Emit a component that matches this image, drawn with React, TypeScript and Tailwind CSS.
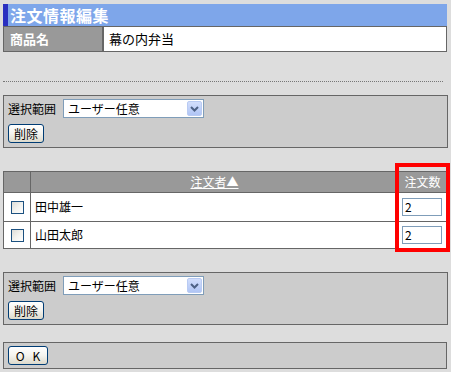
import React from "react";

const font = { fontFamily: '"Noto Sans CJK JP", "Noto Sans", sans-serif' };

function Select() {
  return (
    <div className="flex h-[19px] w-[141px] items-center border border-[#7f9db9] bg-white">
      <span className="flex-1 pl-[4px] text-[12px] leading-none text-black">ユーザー任意</span>
      <div className="mr-[1px] flex h-[15px] w-[15px] items-center justify-center rounded-[2px] border border-[#b9cbf3] bg-gradient-to-b from-[#d2defc] to-[#b0c5f5]">
        <svg width="9" height="6" viewBox="0 0 9 6">
          <path d="M1 1 L4.5 4.5 L8 1" stroke="#4d6185" strokeWidth="2" fill="none" />
        </svg>
      </div>
    </div>
  );
}

function Btn({ children, w }: { children: React.ReactNode; w: string }) {
  return (
    <div
      className={`flex h-[19px] ${w} items-center justify-center whitespace-nowrap rounded-[3px] border border-[#003c74] bg-gradient-to-b from-white via-[#f4f3ee] to-[#dcd9cb] text-[12px] leading-none text-black`}
    >
      {children}
    </div>
  );
}

function Panel() {
  return (
    <div className="flex h-[53px] flex-col gap-[6px] border border-[#666666] bg-[#cccccc] pl-[4px] pt-[3px]">
      <div className="flex items-center gap-[7px]">
        <span className="text-[12px] leading-none text-black">選択範囲</span>
        <Select />
      </div>
      <Btn w="w-[36px]">削除</Btn>
    </div>
  );
}

function Check() {
  return (
    <div className="mx-auto h-[13px] w-[13px] border border-[#1c5180] bg-gradient-to-br from-[#dcdcd7] via-[#f2f2ee] to-white" />
  );
}

export default function App() {
  return (
    <div className="min-h-[372px] w-[451px] bg-[#dddddd] px-[3px] pt-[4px]" style={font}>
      <div className="flex h-[22px] w-[444px] items-center bg-[#7ea6ea]">
        <div className="h-full w-[5px] bg-[#2a2fc0]" />
        <span className="pl-[2px] text-[16px] font-bold leading-none tracking-[0.5px] text-white">注文情報編集</span>
      </div>
      <div className="flex h-[26px] w-[444px] border border-[#666666]">
        <div className="flex w-[100px] items-center border-r-2 border-[#666666] bg-[#999999] pl-[6px] text-[13px] font-bold text-white">
          商品名
        </div>
        <div className="flex flex-1 items-center bg-white pl-[5px] text-[13px] text-black">幕の内弁当</div>
      </div>
      <div className="mt-[29px] h-0 w-[440px] border-t border-dotted border-[#777777]" />
      <div className="mt-[13px]">
        <Panel />
      </div>
      <div className="relative mt-[23px] w-[444px]">
        <table className="w-[444px] border-collapse border border-[#666666] text-[12px]">
          <thead>
            <tr className="h-[21px] bg-[#999999]">
              <th className="w-[27px] border border-[#666666] p-0"></th>
              <th className="border border-[#666666] p-0 font-normal">
                <span className="text-white underline">注文者▲</span>
              </th>
              <th className="w-[48px] border border-[#666666] p-0 text-center font-normal text-white">注文数</th>
            </tr>
          </thead>
          <tbody>
            {[
              ["田中雄一", "2"],
              ["山田太郎", "2"],
            ].map(([name, q], i) => (
              <tr key={i} className={`${i === 0 ? "h-[29px]" : "h-[27px]"} bg-white`}>
                <td className="border border-[#666666] p-0">
                  <Check />
                </td>
                <td className="border border-[#666666] p-0 pl-[4px] text-black">{name}</td>
                <td className="border border-[#666666] p-0 pl-[3px]">
                  <div className="flex h-[18px] w-[40px] items-center border border-[#7f9db9] bg-white pl-[2px] text-[12px] leading-none text-black">
                    {q}
                  </div>
                </td>
              </tr>
            ))}
          </tbody>
        </table>
        <div className="pointer-events-none absolute left-[392px] top-[-8px] h-[89px] w-[55px] border-4 border-[#ff0000]" />
      </div>
      <div className="mt-[23px]">
        <Panel />
      </div>
      <div className="mt-[17px] flex h-[27px] w-[444px] items-center border border-[#666666] bg-[#cccccc] pl-[4px]">
        <Btn w="w-[40px]">
          <span className="flex gap-[8px]">
            <span>O</span>
            <span>K</span>
          </span>
        </Btn>
      </div>
    </div>
  );
}
